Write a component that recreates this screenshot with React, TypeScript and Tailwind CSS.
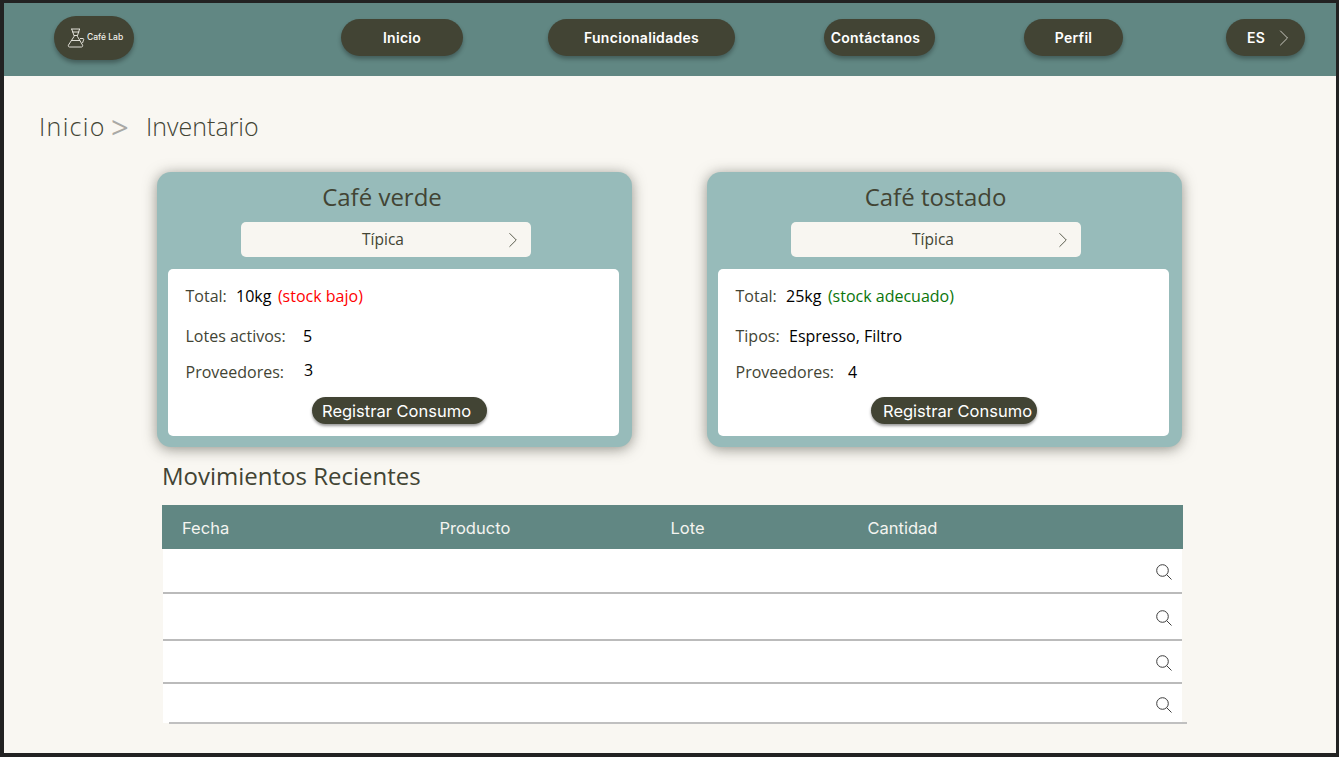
import React from "react";
import { ChevronRight } from "lucide-react";

const mont = "font-['Inter','Liberation_Sans',sans-serif]";
const nun = "font-['Open_Sans','Lato',sans-serif]";

function NavBtn({ label, w, ml, extra = "" }: { label: string; w: string; ml: string; extra?: string }) {
  return (
    <div className={`${w} ${ml} ${extra} h-[37px] mt-[-4px] shrink-0 rounded-full bg-[#424434] text-white text-[14px] tracking-[0.3px] font-semibold flex items-center justify-center shadow-[0_3px_4px_rgba(0,0,0,0.3)] ${mont}`}>
      {label}
    </div>
  );
}

function Card({ title, titleW, amount, status, statusColor, row2, row3, btnClass }: {
  title: string; titleW: string; amount: string; status: string; statusColor: string;
  row2: React.ReactNode; row3: React.ReactNode; btnClass: string;
}) {
  return (
    <div className="w-[475px] h-[275px] rounded-[14px] bg-[#97bbba] shadow-[0_2px_14px_rgba(60,60,50,0.55)] flex flex-col items-start pt-[8px] pl-[11px]">
      <h2 className={`${titleW} text-center h-[33px] leading-[33px] text-[24px] text-[#424434] ${nun}`}>{title}</h2>
      <div className="mt-[9px] ml-[73px] w-[290px] h-[35px] rounded-[5px] bg-[#f8f6f1] flex items-center relative justify-center text-[#424434] text-[15.5px]">
        <span className={`${nun} mr-[6px]`}>Típica</span>
        <ChevronRight className="absolute right-[5px] w-[26px] h-[26px]" strokeWidth={0.8} />
      </div>
      <div className={`mt-[12px] w-[451px] h-[167px] rounded-[5px] bg-white flex flex-col pl-[17.5px] text-[16px] ${nun}`}>
        <div className="mt-[16px] h-[22px] flex items-center text-[#424434]">
          <span className="w-[50.5px]">Total:</span>
          <span className="text-black">{amount}</span>
          <span className={`ml-[6.5px] ${statusColor}`}>{status}</span>
        </div>
        <div className="mt-[18px] h-[22px] flex items-center text-[#424434]">{row2}</div>
        <div className="mt-[14px] h-[22px] flex items-center text-[#424434]">{row3}</div>
        <div className={`h-[27px] mt-[14px] pt-[1px] rounded-full bg-[#424434] text-white text-[16.5px] flex items-center shadow-[0_2px_3px_rgba(0,0,0,0.4)] font-['Inter',sans-serif] ${btnClass}`}>
          Registrar Consumo
        </div>
      </div>
    </div>
  );
}

function Row({ h, last }: { h: string; last?: boolean }) {
  return (
    <div className={`${h} ml-[1px] w-[1019px] bg-white flex items-center justify-end pr-[10.5px] pt-[2px] ${last ? "" : "border-b-2 border-[#bbbbbb]"}`}>
      <svg width="16" height="16" viewBox="0 0 16 16" fill="none" stroke="#3c3c3c" strokeWidth="1">
        <circle cx="6.5" cy="6.5" r="5.8" />
        <path d="M10.7 10.7 15.5 15.5" />
      </svg>
    </div>
  );
}

export default function App() {
  return (
    <div className="w-[1339px] h-[757px] overflow-hidden bg-[#222222] pt-[3px] pl-[4px] pr-[3px] pb-[4px]">
      <div className="w-full h-full bg-[#f9f7f2]">
        <header className="h-[73px] bg-[#618783] flex items-center pl-[50px]">
          <div className="w-[80px] h-[44px] mt-[-4px] shrink-0 rounded-full bg-[#424434] flex items-center pl-[13px] gap-[2px] shadow-[0_3px_4px_rgba(0,0,0,0.3)]">
            <svg width="18" height="20" viewBox="0 0 18 20" fill="none" stroke="#f1efe8" strokeWidth="0.9" className="shrink-0">
              <path d="M4 1h9M4.7 1 7 7.5h3.5L12.6 1M5.3 4h7M7 7.5v1L1.5 17c-.5 1 0 2 1 2h12c1 0 1.5-1 1-2L10.5 8.5v-1M4.5 12.5h8.5M13 10.5h3c.6 0 .8.5.7 1l-1.2 3.5" />
            </svg>
            <span className="text-[8.5px] whitespace-nowrap text-[#f1efe8] font-['Inter',sans-serif] font-medium">Café Lab</span>
          </div>
          <NavBtn label="Inicio" w="w-[122px]" ml="ml-[207px]" />
          <NavBtn label="Funcionalidades" w="w-[187px]" ml="ml-[85px]" />
          <NavBtn label="Contáctanos" w="w-[111px]" ml="ml-[89px]" extra="pr-[8px]" />
          <NavBtn label="Perfil" w="w-[99px]" ml="ml-[89px]" />
          <div className={`w-[79px] h-[37px] mt-[-4px] ml-[103px] shrink-0 rounded-full bg-[#424434] text-white text-[14px] tracking-[0.3px] font-semibold flex items-center pl-[21px] shadow-[0_3px_4px_rgba(0,0,0,0.3)] ${mont}`}>
            <span className="w-[19px]">ES</span>
            <ChevronRight className="ml-[4px] w-[28px] h-[28px] text-[#e8e6df]" strokeWidth={0.7} />
          </div>
        </header>

        <nav className={`mt-[34px] ml-[35px] h-[34px] flex items-center text-[25px] font-light text-[#424434] ${nun}`}>
          <span className="w-[72px] tracking-[1.3px]">Inicio</span>
          <span className="w-[35px] text-[31px] text-[#a9a9a5] font-medium">&gt;</span>
          <span>Inventario</span>
        </nav>

        <section className="mt-[28px] ml-[153px] flex gap-[75px]">
          <Card
            title="Café verde"
            titleW="w-[428px]"
            amount="10kg"
            status="(stock bajo)"
            statusColor="text-[#ff0000]"
            row2={<><span className="w-[117.5px]">Lotes activos:</span><span className="text-black">5</span></>}
            row3={<><span className="w-[118.5px]">Proveedores:</span><span className="text-black mt-[-4px]">3</span></>}
            btnClass="w-[175px] ml-[126.5px] pl-[10px]"
          />
          <Card
            title="Café tostado"
            titleW="w-[435px]"
            amount="25kg"
            status="(stock adecuado)"
            statusColor="text-[#0a750a]"
            row2={<><span className="w-[53.5px]">Tipos:</span><span className="text-black">Espresso, Filtro</span></>}
            row3={<><span className="w-[112.5px]">Proveedores:</span><span className="text-black">4</span></>}
            btnClass="w-[166px] ml-[135.5px] pl-[12px]"
          />
        </section>

        <h2 className={`mt-[12px] ml-[158px] h-[34px] leading-[34px] text-[24px] text-[#424434] ${nun}`}>Movimientos Recientes</h2>

        <section className="mt-[12px] ml-[158px] w-[1021px]">
          <div className="h-[44px] pt-[3px] bg-[#618783] text-[#f4f4f0] text-[16.5px] flex items-center font-['Inter',sans-serif]">
            <span className="ml-[20px] w-[257.5px]">Fecha</span>
            <span className="w-[231px]">Producto</span>
            <span className="w-[197px]">Lote</span>
            <span>Cantidad</span>
          </div>
          <Row h="h-[45px]" />
          <Row h="h-[47px]" />
          <Row h="h-[43px]" />
          <Row h="h-[39px]" last />
          <div className="ml-[7px] mt-[-1px] w-[1018px] h-[2px] bg-[#c0c0c0]" />
        </section>
      </div>
    </div>
  );
}
